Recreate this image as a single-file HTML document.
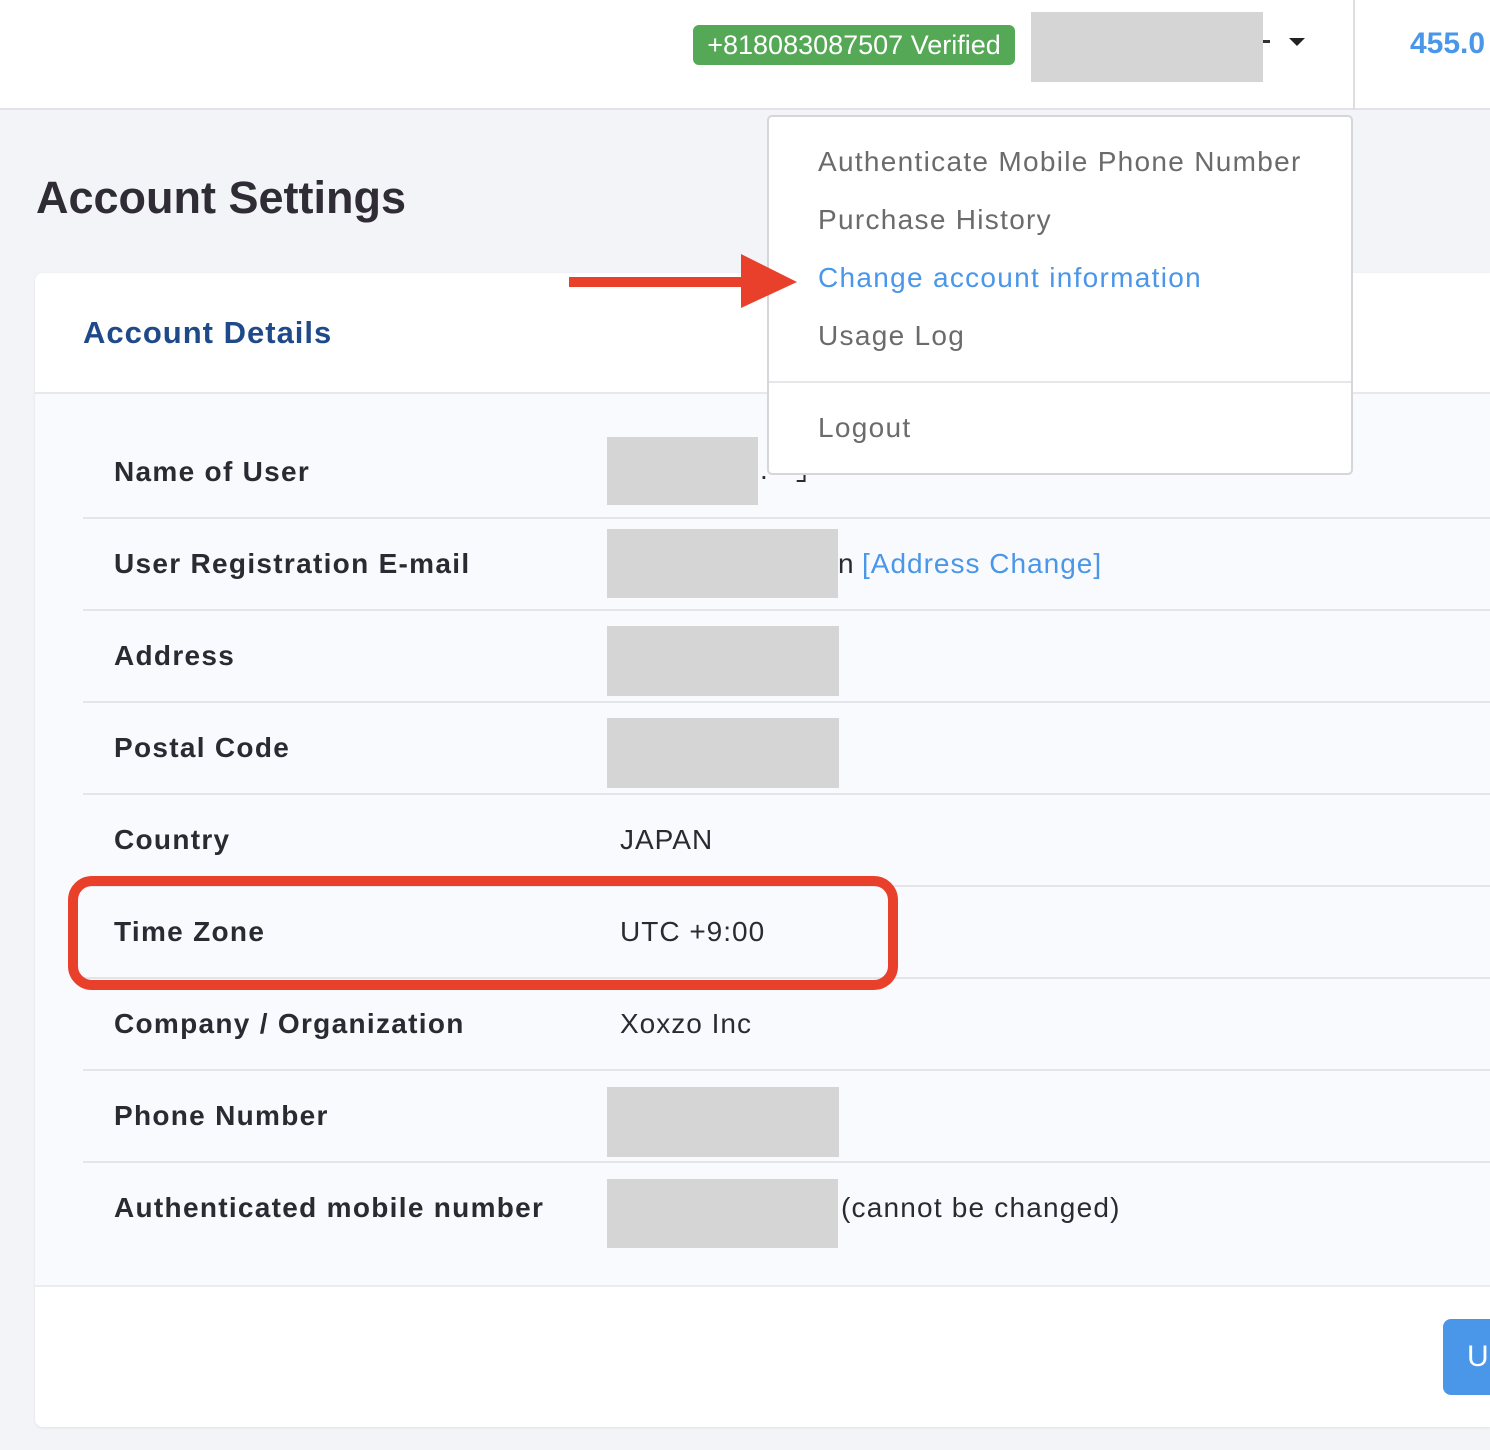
<!DOCTYPE html>
<html><head><meta charset="utf-8"><style>
*{margin:0;padding:0;box-sizing:border-box}
body{width:1490px;height:1450px;background:#f3f4f8;position:relative;overflow:hidden;font-family:"Liberation Sans",sans-serif}
.a{position:absolute;white-space:nowrap}
.lbl{position:absolute;left:114px;font-weight:bold;font-size:28px;color:#2b2a33;height:40px;line-height:40px;letter-spacing:1.3px;white-space:nowrap}
.val{position:absolute;left:620px;font-size:28px;color:#2b2a33;height:40px;line-height:40px;letter-spacing:1px}
.gray{position:absolute;background:#d5d5d5}
.line{position:absolute;left:83px;right:0;height:2px;background:#e4e5ea}
.mi{position:absolute;left:818px;font-size:28px;color:#6b6b6b;height:40px;line-height:40px;white-space:nowrap;letter-spacing:1.3px}
</style></head><body>
<div class="a" style="left:0;top:0;width:1490px;height:110px;background:#fff;border-bottom:2px solid #e2e3e8"></div>
<div class="a" style="left:1353px;top:0;width:2px;height:110px;background:#dedede"></div>
<div class="a" style="left:693px;top:25px;width:322px;height:40px;background:#55a855;border-radius:6px;color:#fff;font-size:27px;line-height:40px;text-align:center">+818083087507 Verified</div>
<div class="gray" style="left:1031px;top:12px;width:232px;height:70px"></div>
<div class="a" style="left:1263px;top:40px;width:7px;height:3px;background:#333"></div>
<div class="a" style="left:1289px;top:38px;width:0;height:0;border-left:8px solid transparent;border-right:8px solid transparent;border-top:8px solid #222"></div>
<div class="a" style="left:1410px;top:24px;font-size:30px;font-weight:bold;color:#4a96e8;line-height:40px">455.0</div>

<div class="a" style="left:36px;top:172px;font-size:45px;font-weight:bold;color:#2f2c35;line-height:52px">Account Settings</div>

<div class="a" style="left:35px;top:273px;width:1460px;height:1154px;background:#f9fafd;border-radius:8px;box-shadow:0 1px 3px rgba(0,0,0,.08)"></div>
<div class="a" style="left:35px;top:273px;width:1460px;height:121px;background:#fff;border-radius:8px 0 0 0;border-bottom:2px solid #e8e9ee"></div>
<div class="a" style="left:83px;top:313px;font-size:31px;font-weight:bold;color:#1f4a8a;line-height:40px;letter-spacing:1px">Account Details</div>
<div class="a" style="left:35px;top:1285px;width:1460px;height:142px;background:#fff;border-top:2px solid #ececf0;border-radius:0 0 0 8px"></div>
<div class="a" style="left:1443px;top:1319px;width:60px;height:76px;background:#4a96e8;border-radius:8px;color:#fff;font-size:30px;line-height:76px;padding-left:24px">U</div>

<div class="lbl" style="top:452px">Name of User</div>
<div class="gray" style="left:607px;top:437px;width:151px;height:68px"></div>
<div class="a" style="left:760px;top:455px;font-size:28px;color:#2b2a33;line-height:30px">.ー」ー</div>
<div class="line" style="top:517px"></div>
<div class="lbl" style="top:544px">User Registration E-mail</div>
<div class="gray" style="left:607px;top:529px;width:231px;height:69px"></div>
<div class="a" style="left:838px;top:544px;font-size:28px;color:#2b2a33;line-height:40px">n</div>
<div class="a" style="left:862px;top:544px;font-size:28px;color:#4a96e8;line-height:40px;letter-spacing:1px">[Address Change]</div>
<div class="line" style="top:609px"></div>
<div class="lbl" style="top:636px">Address</div>
<div class="gray" style="left:607px;top:626px;width:232px;height:70px"></div>
<div class="line" style="top:701px"></div>
<div class="lbl" style="top:728px">Postal Code</div>
<div class="gray" style="left:607px;top:718px;width:232px;height:70px"></div>
<div class="line" style="top:793px"></div>
<div class="lbl" style="top:820px">Country</div>
<div class="val" style="top:820px">JAPAN</div>
<div class="line" style="top:885px"></div>
<div class="lbl" style="top:912px">Time Zone</div>
<div class="val" style="top:912px">UTC +9:00</div>
<div class="line" style="top:977px"></div>
<div class="lbl" style="top:1004px">Company / Organization</div>
<div class="val" style="top:1004px">Xoxzo Inc</div>
<div class="line" style="top:1069px"></div>
<div class="lbl" style="top:1096px">Phone Number</div>
<div class="gray" style="left:607px;top:1087px;width:232px;height:70px"></div>
<div class="line" style="top:1161px"></div>
<div class="lbl" style="top:1188px">Authenticated mobile number</div>
<div class="gray" style="left:607px;top:1179px;width:231px;height:69px"></div>
<div class="a" style="left:841px;top:1188px;font-size:28px;color:#2b2a33;line-height:40px;letter-spacing:1.2px">(cannot be changed)</div>

<div class="a" style="left:68px;top:876px;width:830px;height:114px;border:10px solid #e8402a;border-radius:24px"></div>

<div class="a" style="left:767px;top:115px;width:586px;height:360px;background:#fff;border:2px solid #d6d6da;border-radius:5px"></div>
<div class="mi" style="top:142px">Authenticate Mobile Phone Number</div>
<div class="mi" style="top:200px">Purchase History</div>
<div class="mi" style="top:258px;color:#4a96e8">Change account information</div>
<div class="mi" style="top:316px">Usage Log</div>
<div class="a" style="left:769px;top:381px;width:582px;height:2px;background:#e6e6ea"></div>
<div class="mi" style="top:408px">Logout</div>

<svg class="a" style="left:560px;top:250px" width="245" height="64"><rect x="9" y="27" width="175" height="10" fill="#e8402a"/><polygon points="181,4 237,32 181,58" fill="#e8402a"/></svg>
</body></html>
